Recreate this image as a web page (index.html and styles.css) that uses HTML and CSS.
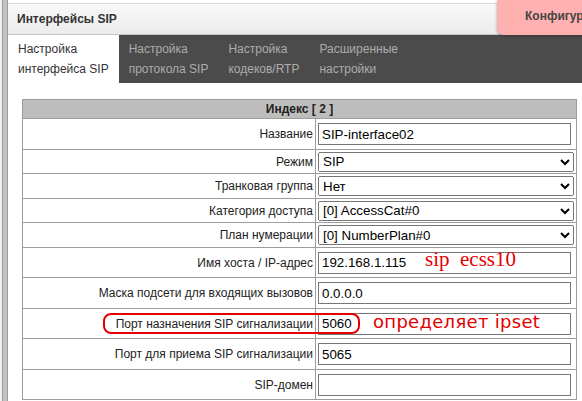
FILE: index.html
```html
<!DOCTYPE html>
<html lang="ru">
<head>
  <meta charset="UTF-8">
  <title>Интерфейсы SIP</title>
  <link rel="stylesheet" href="styles.css">
</head>
<body>
  <div class="frame">
    <div class="side-bar"></div>

    <div class="main">
      <!-- Header -->
      <div class="top">Интерфейсы SIP</div>
      <div class="notice">Конфигурация не сохранена</div>

      <!-- Tabs -->
      <div class="tabs">
        <div class="tab active">Настройка<br>интерфейса SIP</div>
        <div class="tab">Настройка<br>протокола SIP</div>
        <div class="tab">Настройка<br>кодеков/RTP</div>
        <div class="tab">Расширенные<br>настройки</div>
      </div>

      <!-- Settings table -->
      <div class="content">
        <table class="settings">
          <tr><th colspan="2">Индекс [ 2 ]</th></tr>
          <tr class="text-row">
            <td class="label">Название</td>
            <td><input type="text" value="SIP-interface02"></td>
          </tr>
          <tr class="sel-row">
            <td class="label">Режим</td>
            <td><select><option>SIP</option></select></td>
          </tr>
          <tr class="sel-row">
            <td class="label">Транковая группа</td>
            <td><select><option>Нет</option></select></td>
          </tr>
          <tr class="sel-row">
            <td class="label">Категория доступа</td>
            <td><select><option>[0] AccessCat#0</option></select></td>
          </tr>
          <tr class="sel-row">
            <td class="label">План нумерации</td>
            <td><select><option>[0] NumberPlan#0</option></select></td>
          </tr>
          <tr class="text-row">
            <td class="label">Имя хоста / IP-адрес</td>
            <td><input type="text" value="192.168.1.115"></td>
          </tr>
          <tr class="text-row">
            <td class="label">Маска подсети для входящих вызовов</td>
            <td><input type="text" value="0.0.0.0"></td>
          </tr>
          <tr class="text-row">
            <td class="label">Порт назначения SIP сигнализации</td>
            <td><input type="text" value="5060"></td>
          </tr>
          <tr class="text-row">
            <td class="label">Порт для приема SIP сигнализации</td>
            <td><input type="text" value="5065"></td>
          </tr>
          <tr class="text-row">
            <td class="label">SIP-домен</td>
            <td><input type="text" value=""></td>
          </tr>
        </table>
      </div>

      <!-- Red notes drawn over the screenshot -->
      <div class="note note-host">sip&nbsp; ecss10</div>
      <div class="note note-port">определяет ipset</div>
      <div class="note-box"></div>
    </div>
  </div>
</body>
</html>
```

FILE: styles.css
```css
/* Reset & base */
* { margin: 0; padding: 0; box-sizing: border-box; }
body { font-family: "Liberation Sans", Arial, sans-serif; color: #222; background: #fff; overflow: hidden; }

.frame { display: flex; height: 401px; background: #f1f1f1; }

/* Left frame bar */
.side-bar {
  width: 6px;
  margin-left: 2px;
  background: #c2c2c2;
  border-left: 1px solid #9a9a9a;
  border-right: 1px solid #9a9a9a;
}

.main { flex: 1; position: relative; background: #fff; overflow: hidden; }

/* Header */
.top {
  height: 32px;
  margin-top: 3px;
  border-top: 1px solid #d8d8d8;
  border-bottom: 1px solid #c4c4c4;
  background: linear-gradient(#f8f8f8, #ececec);
  padding-left: 9px;
  display: flex;
  align-items: center;
  font-size: 12px;
  font-weight: bold;
  color: #333;
}

/* Unsaved config notice */
.notice {
  position: absolute;
  top: 0;
  left: 489px;
  height: 35px;
  width: 200px;
  padding-left: 28px;
  line-height: 33px;
  background: #ffb1b1;
  border-radius: 0 0 0 7px;
  box-shadow: 0 1px 3px rgba(0, 0, 0, 0.35);
  font-size: 12px;
  font-weight: bold;
  color: #444;
  white-space: nowrap;
}

/* Tabs */
.tabs { display: flex; background: #4b4b4b; height: 48px; }
.tab {
  padding: 4px 10px;
  line-height: 20px;
  font-size: 12px;
  color: #acacac;
}
.tab.active { background: #fff; color: #333; }

/* Settings table */
.content { padding: 16px 0 0 14px; background: #fff; }
.settings {
  width: 555px;
  border-collapse: collapse;
  border: 1px solid #9c9c9c;
}
.settings th {
  height: 19px;
  padding: 0;
  background: #bdbdbd;
  border: 1px solid #9c9c9c;
  font-size: 12px;
  font-weight: bold;
  color: #222;
}
.settings td { border: 1px solid #9c9c9c; padding: 0 2px; }
.settings td.label {
  width: 294px;
  text-align: right;
  font-size: 12px;
  color: #222;
}
.text-row td { padding-top: 4px; padding-bottom: 3.5px; }
.sel-row td { padding-top: 2px; padding-bottom: 1.5px; }

.settings input {
  display: block;
  width: 253px;
  height: 22px;
  padding: 1px 3px;
  border: 1px solid #777;
  font-family: "Liberation Sans", Arial, sans-serif;
  font-size: 13.33px;
  color: #000;
}
.settings select {
  display: block;
  width: 256px;
  height: 20px;
  font-family: "Liberation Sans", Arial, sans-serif;
  font-size: 13.33px;
  color: #000;
}

/* Annotations */
.note { position: absolute; color: #e40000; white-space: nowrap; }
.note-host {
  left: 417px;
  top: 249px;
  font-family: "Liberation Serif", serif;
  font-size: 21px;
  line-height: 20px;
}
.note-port {
  left: 365px;
  top: 313px;
  font-family: "DejaVu Sans", sans-serif;
  font-size: 18px;
  line-height: 18px;
  letter-spacing: 0.3px;
}
.note-box {
  position: absolute;
  left: 95px;
  top: 313px;
  width: 257px;
  height: 21px;
  border: 2.5px solid #e40000;
  border-radius: 8px;
}
```
